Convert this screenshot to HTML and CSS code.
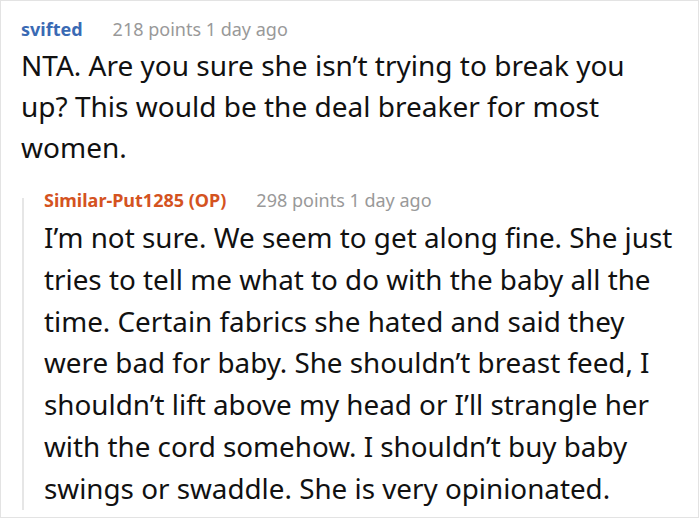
FILE: index.html
```html
<!DOCTYPE html>
<html>
<head>
<meta charset="utf-8">
<link rel="stylesheet" href="styles.css">
</head>
<body>
<div class="card">
  <div class="comment">
    <div class="meta"><span class="user">svifted</span><span class="info">218 points 1 day ago</span></div>
    <div class="text main">NTA. Are you sure she isn’t trying to break you up? This would be the deal breaker for most women.</div>
    <div class="reply">
      <div class="meta"><span class="user op">Similar-Put1285 (OP)</span><span class="info">298 points 1 day ago</span></div>
      <div class="text">I’m not sure. We seem to get along fine. She just tries to tell me what to do with the baby all the time. Certain fabrics she hated and said they were bad for baby. She shouldn’t breast feed, I shouldn’t lift above my head or I’ll strangle her with the cord somehow. I shouldn’t buy baby swings or swaddle. She is very opinionated.</div>
    </div>
  </div>
</div>
</body>
</html>
```
FILE: styles.css
```css
html, body {
  margin: 0;
  padding: 0;
  background: #ffffff;
}
body {
  width: 700px;
  height: 520px;
  overflow: hidden;
  font-family: "Noto Sans", "Open Sans", sans-serif;
}
.card {
  box-sizing: border-box;
  width: 699px;
  height: 518px;
  border: 1px solid #e3e3e3;
  padding: 16px 10px 0 20px;
  overflow: hidden;
}
.meta {
  display: flex;
  gap: 30px;
  font-size: 18px;
  line-height: 24px;
  margin-bottom: 4px;
}
.user {
  font-weight: 700;
  color: #3a6ab4;
}
.user.op {
  color: #d4531f;
}
.info {
  color: #999999;
}
.text {
  font-size: 28px;
  line-height: 41px;
  color: #111111;
}
.text.main {
  max-width: 640px;
}
.reply {
  position: relative;
  margin-top: 20px;
  margin-left: 1px;
  padding-left: 22px;
}
.reply .meta {
  margin-bottom: 5px;
}
.reply .text {
  font-size: 27.8px;
  line-height: 41.8px;
}
.reply::before {
  content: "";
  position: absolute;
  left: 0;
  top: 10px;
  bottom: 0;
  width: 2px;
  background: #e6e6e6;
}
```
